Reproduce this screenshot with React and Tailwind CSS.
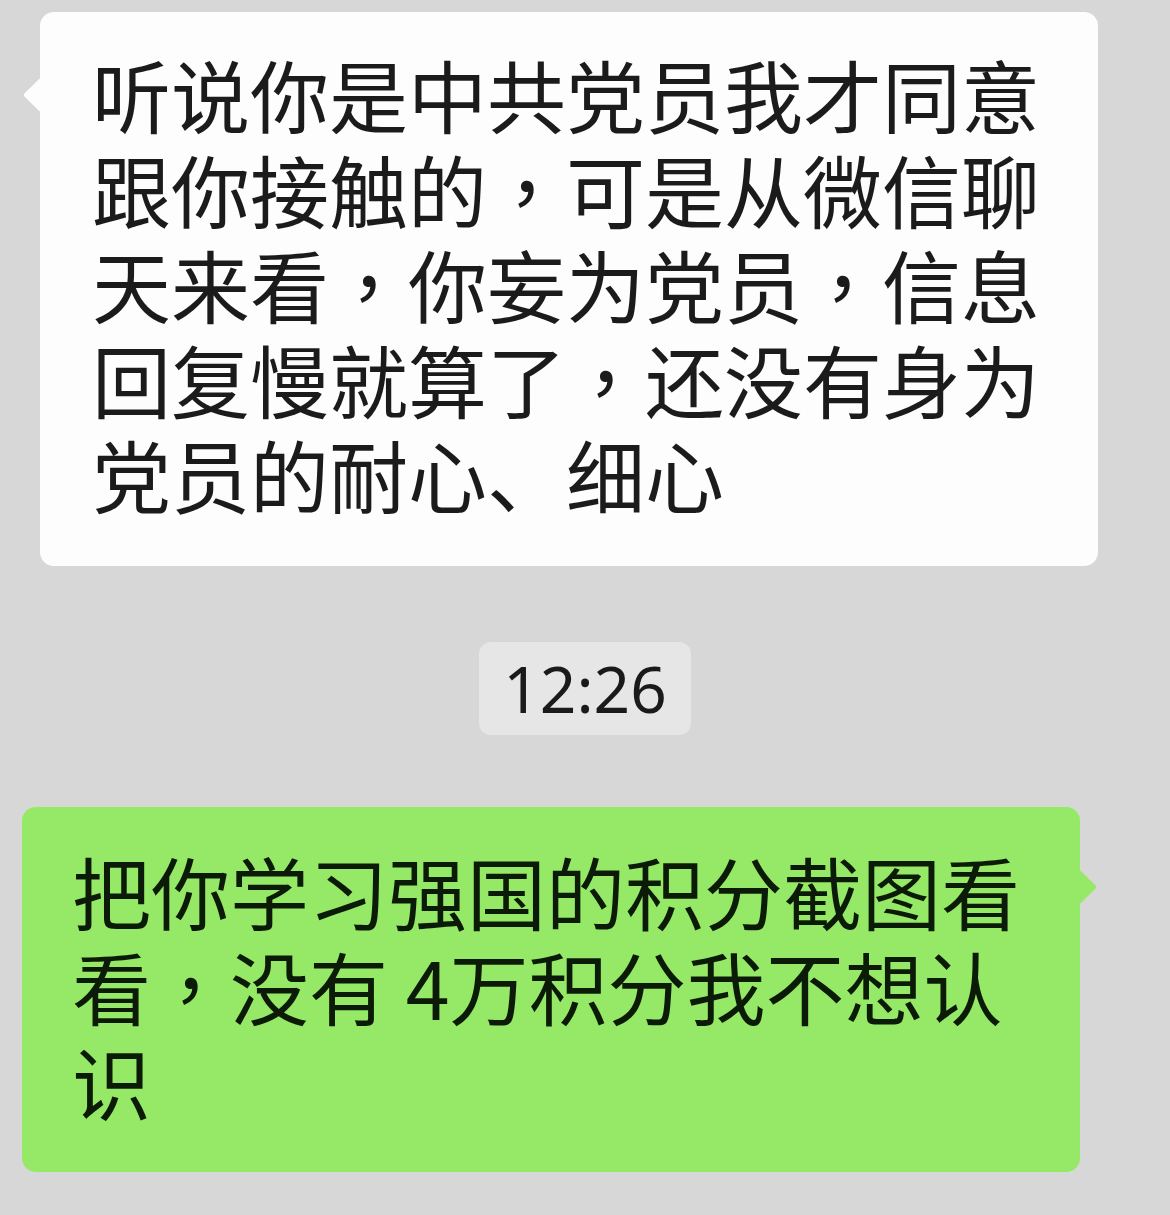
import React from 'react';

const incoming = [
  '听说你是中共党员我才同意',
  '跟你接触的，可是从微信聊',
  '天来看，你妄为党员，信息',
  '回复慢就算了，还没有身为',
  '党员的耐心、细心',
];

const outgoing = ['把你学习强国的积分截图看', '看，没有 4万积分我不想认', '识'];

const cjk = { fontFamily: '"Noto Sans CJK SC", "Noto Sans", sans-serif' };
const tc = { fontFamily: '"Noto Sans CJK TC", "Noto Sans CJK SC", sans-serif' };

// full-width commas sit centred in their cell, as in the TC glyph set
const Line = ({ text }) => (
  <div className="whitespace-pre h-[95px]">
    {text.split(/(，)/).map((part, i) =>
      part === '，' ? (
        <span key={i} className="inline-block h-[95px] align-top" style={tc}>{part}</span>
      ) : (
        <span key={i} className="inline-block h-[95px] align-top">{part}</span>
      )
    )}
  </div>
);

const App = () => {
  return (
    <div className="w-[1170px] h-[1215px] bg-[#d7d7d7] overflow-hidden" style={cjk}>
      {/* Incoming message */}
      <div className="pt-[12px] pl-[40px]">
        <div className="relative w-[1058px] h-[554px] bg-[#fdfdfd] rounded-[14px] pl-[52px] pt-[34px]">
          <div className="absolute left-[-12px] top-[71px] w-6 h-6 bg-[#fdfdfd] rotate-45 rounded-[2px]" />
          <div className="relative text-[79px] leading-[95px] text-[#1b1b1b]">
            {incoming.map((line) => (
              <Line key={line} text={line} />
            ))}
          </div>
        </div>
      </div>

      {/* Timestamp */}
      <div className="flex justify-center mt-[76px]">
        <div
          className="w-[212px] h-[93px] bg-[#e6e6e6] rounded-[12px] flex items-center justify-center text-[64px] leading-[80px] text-[#1a1a1a]"
          style={{ fontFamily: '"Noto Sans", sans-serif' }}
        >
          12:26
        </div>
      </div>

      {/* Outgoing message */}
      <div className="mt-[72px] pl-[22px]">
        <div className="relative w-[1058px] h-[365px] bg-[#95e966] rounded-[14px] pl-[50px] pt-[36px]">
          <div className="absolute right-[-12px] top-[68px] w-6 h-6 bg-[#95e966] rotate-45 rounded-[2px]" />
          <div className="relative text-[79px] leading-[95px] text-[#0c1a08]">
            {outgoing.map((line) => (
              <Line key={line} text={line} />
            ))}
          </div>
        </div>
      </div>
    </div>
  );
};

export default App;
